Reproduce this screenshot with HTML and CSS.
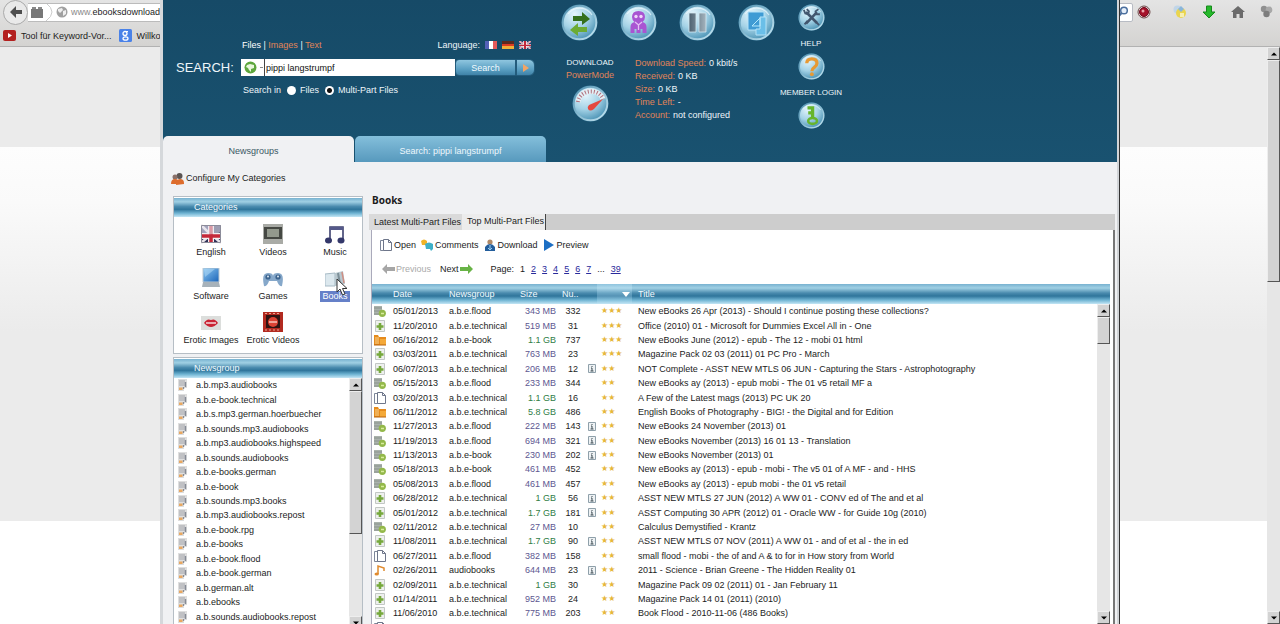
FILE: index.html
```html
<!DOCTYPE html>
<html lang="en">
<head>
<meta charset="utf-8">
<title>Newsgroups - Books</title>
<link rel="stylesheet" href="styles.css">
</head>
<body>
<svg class="sprite" aria-hidden="true">
  <defs>
    <radialGradient id="orb" cx="35%" cy="25%" r="85%"><stop offset="0" stop-color="#e4f5fc"/><stop offset=".5" stop-color="#a4d2e6"/><stop offset="1" stop-color="#3c88ac"/></radialGradient>
    <linearGradient id="rim" x1="0" y1="0" x2="1" y2="1"><stop offset="0" stop-color="#4f8fae"/><stop offset="1" stop-color="#c4e6f3"/></linearGradient>
    <linearGradient id="bars"><stop offset="0" stop-color="#4d6170"/><stop offset="1" stop-color="#a4b4be"/></linearGradient>
    <linearGradient id="screen" x1="0" y1="0" x2="1" y2="1"><stop offset="0" stop-color="#8cc8f2"/><stop offset="1" stop-color="#1b64b8"/></linearGradient>
    <symbol id="disc" viewBox="0 0 37 37"><circle cx="18.500" cy="18.500" r="18" fill="#286a8c"/><circle cx="18.500" cy="18.500" r="16.800" fill="url(#orb)" stroke="url(#rim)" stroke-width="2"/><path d="M7 10C13 2 25 2 31 11" fill="none" stroke="#effaff" stroke-width="1.200" opacity=".7"/></symbol>
    <symbol id="r-server" viewBox="0 0 12 12"><path d="M0 1h8v9H0z" fill="#aab2ac"/><path d="M0 3h8M0 6h8M0 9h7" stroke="#8a928d" stroke-width="1"/><circle cx="8.300" cy="8.300" r="3.600" fill="#93b84a"/><path d="M7 8.500h3" stroke="#d9ec9e" stroke-width="1.500"/></symbol>
    <symbol id="r-plus" viewBox="0 0 12 12"><path d="M1.500.5h9v11h-9z" fill="#eef0ee" stroke="#c2c7c4"/><path d="M6 3v7M2.500 6.500h7" stroke="#76a83c" stroke-width="2.600"/></symbol>
    <symbol id="r-folder" viewBox="0 0 12 12"><path d="M0 1h4l1 2h7v8H0z" fill="#e58a1c"/><path d="M2 3v7M4 3v7" stroke="#fbd491"/><path d="M6 5h6v6H6z" fill="#f4a938"/><path d="M0 11h12" stroke="#b8620c"/></symbol>
    <symbol id="r-pages" viewBox="0 0 12 12"><path d="M.5 1.500h5v10h-5z" fill="#fff" stroke="#7d8699"/><path d="M3.500.5h5l3 3v8h-8z" fill="#fff" stroke="#6e768a"/><path d="M8.500.5v3h3" fill="none" stroke="#6e768a"/></symbol>
    <symbol id="r-music" viewBox="0 0 12 12"><path d="M4 10V2l6 2v3" fill="none" stroke="#e08a2e" stroke-width="1.500"/><ellipse cx="2.700" cy="10" rx="2.200" ry="1.600" fill="#e08a2e"/></symbol>
    <symbol id="r-info" viewBox="0 0 8 9"><path d="M.5.5h7v8h-7z" fill="#eef2f4" stroke="#8fa0aa"/><path d="M4 2v1M3 4h1v3M2.500 7h3" stroke="#3f4c55" fill="none"/></symbol>
    <symbol id="n-group" viewBox="0 0 12 12"><path d="M1 0h9v9H7v3H1z" fill="#dedede"/><path d="M2 2h6M2 4h7M2 6h6" stroke="#a2a4aa"/><path d="M8.500 3v5M6.500 8v2" stroke="#868c96" stroke-width="1.400"/><path d="M2 8.500h3.500V11H2z" fill="#e9a860"/></symbol>
    <symbol id="union" viewBox="0 0 20 20"><path d="M0 0h20v20H0z" fill="#2b3a6b"/><path d="M0 0l20 20M20 0L0 20" stroke="#fff" stroke-width="3.500"/><path d="M0 0l20 20M20 0L0 20" stroke="#c5283a" stroke-width="1.200"/><path d="M10 0v20M0 11h20" stroke="#fff" stroke-width="6"/><path d="M10 0v20M0 11h20" stroke="#c5283a" stroke-width="3.500"/></symbol>
    <symbol id="up" viewBox="0 0 12 12"><path d="M3 7.500l3-3 3 3z" fill="#000"/></symbol>
    <symbol id="down" viewBox="0 0 12 12"><path d="M3 4.500l3 3 3-3z" fill="#000"/></symbol>
  </defs>
</svg>

<div class="browser">
  <header class="chrome">
    <div class="nav">
      <button class="back" aria-label="Back"><svg viewBox="0 0 14 14"><path d="M1 7l6-6v4h6v4H7v4z" fill="#4e4e4e"/></svg></button>
      <div class="address">
        <svg class="i12" viewBox="0 0 12 12"><path d="M0 3h12v9H0z" fill="#777"/><path d="M1 1h4v2H1zM7 1h4v2H7z" fill="#888"/></svg>
        <svg class="chevron" viewBox="0 0 8 18"><path d="M0 0q12 9 0 18" fill="none" stroke="#ccc"/></svg>
        <svg class="i12" viewBox="0 0 12 12"><circle cx="6" cy="6" r="5.500" fill="#a0a0a0"/><path d="M2 3l4-1 1 2-3 3-2-2zM7 5l3-1v4l-3 2z" fill="#eee"/></svg>
        <span class="url"><span class="dim">www.</span>ebooksdownloader.com</span>
      </div>
      <div class="websearch"><svg class="i12" viewBox="0 0 12 12"><circle cx="7" cy="4.500" r="3.300" fill="#e6effa" stroke="#4b6f9e" stroke-width="1.500"/><path d="M4.500 7L1 11" stroke="#4b6f9e" stroke-width="2"/></svg></div>
      <div class="addons">
        <svg viewBox="0 0 14 14"><circle cx="7" cy="7" r="6" fill="#eee" stroke="#6f4848"/><circle cx="7" cy="7" r="4.500" fill="#a5122a" stroke="#6e0a1b"/><circle cx="6" cy="6" r="1.500" fill="#e9a5ac"/></svg>
        <svg viewBox="0 0 14 14"><circle cx="4.500" cy="4.500" r="4" fill="#c0d5e8"/><circle cx="8" cy="8" r="5" fill="#ead54f"/><path d="M5 4l3-3 3 3-3 3z" fill="#8ab6da"/><path d="M7 8h4v4H7z" fill="#f7efb0"/></svg>
        <svg viewBox="0 0 14 14"><path d="M4.500 1h5v6H13l-6 6-6-6h3.500z" fill="#26b92b" stroke="#178a1c"/></svg>
        <svg viewBox="0 0 14 14"><path d="M7 1l7 6h-2v6H8.500V9h-3v4H2V7H0z" fill="#6b6b6b"/></svg>
        <svg viewBox="0 0 14 14"><circle cx="4" cy="4" r="3.200" fill="#8f8f8f"/><circle cx="9" cy="5" r="3.400" fill="#a8a8a8"/><circle cx="6.500" cy="9" r="3.200" fill="#7d7d7d"/></svg>
      </div>
    </div>
    <div class="bookmarks">
      <a href="#"><svg class="i13" viewBox="0 0 13 13"><rect y="1" width="13" height="11" rx="2" fill="#b3201f"/><path d="M5 4l4 2.500L5 9z" fill="#fff"/></svg>Tool für Keyword-Vor...</a>
      <a href="#"><svg class="i13" viewBox="0 0 13 13"><rect width="13" height="13" rx="1.500" fill="#4a82e8"/><circle cx="6" cy="4.500" r="2" fill="none" stroke="#fff" stroke-width="1.300"/><ellipse cx="6.500" cy="9.500" rx="2.500" ry="1.700" fill="none" stroke="#fff" stroke-width="1.300"/><path d="M7 2.500h2" stroke="#fff"/></svg>Willkommen</a>
    </div>
  </header>
  <div class="viewport">
    <div class="backdrop"></div>
    <div class="scroll" role="scrollbar" aria-label="Page" aria-controls="app" aria-valuenow="0"><button aria-label="Up"><svg><use href="#up"/></svg></button><div class="thumb thumb-page"></div><button class="end" aria-label="Down"><svg><use href="#down"/></svg></button></div>
  </div>
</div>

<div class="app" id="app">
  <header class="top">
    <div class="panels">
      <form class="finder">
        <div class="kinds"><span><a href="#" class="on">Files</a> | <a href="#">Images</a> | <a href="#">Text</a></span>
          <span class="langs">Language:
            <svg viewBox="0 0 12 8"><path d="M0 0h4v8H0z" fill="#5361b8"/><path d="M4 0h4v8H4z" fill="#fff"/><path d="M8 0h4v8H8z" fill="#e55a5a"/></svg>
            <svg viewBox="0 0 12 8"><path d="M0 0h12v3H0z" fill="#5b2a20"/><path d="M0 3h12v3H0z" fill="#dc3d22"/><path d="M0 5h12v3H0z" fill="#f0b03a"/></svg>
            <svg viewBox="0 0 20 20" preserveAspectRatio="none"><use href="#union"/></svg>
          </span></div>
        <label class="caption" for="q">SEARCH:</label>
        <div class="field">
          <span class="engine"><svg class="i13" viewBox="0 0 13 13"><circle cx="6.500" cy="6.500" r="6" fill="#5da63c"/><path d="M3 4l3-1 4 1v3L7 8v3L5 9 4 7 2 6z" fill="#e8f6dc"/></svg><i></i></span>
          <input id="q" type="text" value="pippi langstrumpf">
          <button type="button" class="go">Search</button>
          <button type="button" class="more" aria-label="More"><svg viewBox="0 0 6 8"><path d="M0 0l6 4-6 4z" fill="#f2a565"/></svg></button>
        </div>
        <div class="scope">Search in <label><input type="radio" name="s">Files</label><label><input type="radio" name="s" checked>Multi-Part Files</label></div>
      </form>
      <section class="status">
        <div class="orbs">
          <button aria-label="Transfer"><svg viewBox="0 0 37 37"><use href="#disc"/><path d="M12 12h9V8l8 7-8 6v-4h-9z" fill="#35701c"/><path d="M26 23h-9v-4l-8 7 8 6v-4h9z" fill="#6cab34"/></svg></button>
          <button aria-label="Anonymous"><svg viewBox="0 0 37 37"><use href="#disc"/><path d="M12 13q0-6 6.500-6t6.500 6q0 3-2.500 5 4 1 4 5v6h-4v-4h-2v4h-4v-4h-2v4h-4v-6q0-4 4-5-2.500-2-2.500-5z" fill="#a955d2"/><circle cx="16" cy="12.500" r="1.700" fill="#f1d6fb"/><circle cx="21" cy="12.500" r="1.700" fill="#f1d6fb"/><path d="M15 18l3.500 3 3.500-3M18.500 21v5" stroke="#e6bdf5" fill="none" stroke-width="1.300"/></svg></button>
          <button aria-label="Pause"><svg viewBox="0 0 37 37"><use href="#disc"/><path d="M10 9h7v19h-7zM20 9h7v19h-7z" fill="url(#bars)" stroke="#d3e7f0" stroke-width=".8"/></svg></button>
          <button aria-label="Copy"><svg viewBox="0 0 37 37"><use href="#disc"/><path d="M10 8h16v18H10z" fill="#3f9bd4" stroke="#b5e2f7"/><path d="M22 13h6v18H18v-6h4z" fill="#6bbfe8" stroke="#b5e2f7"/><path d="M14 22l8-8v8z" fill="none" stroke="#b5e8fc"/></svg></button>
        </div>
        <div class="meters">
          <div class="power"><span class="caps">DOWNLOAD</span><a href="#">PowerMode</a>
            <svg viewBox="0 0 37 37"><use href="#disc"/><path d="M6 17C8 4 27 3 31 14" fill="none" stroke="#e3eff5" stroke-width="5"/><path d="M6 17C8 4 27 3 31 14" fill="none" stroke="#b0707c" stroke-width="4" stroke-dasharray="1 2"/><path d="M17 20l14-6-9 10q-4 3-6 0-1-2 1-4z" fill="#e4483f"/></svg></div>
          <dl><div><dt>Download Speed:</dt><dd>0 kbit/s</dd></div><div><dt>Received:</dt><dd>0 KB</dd></div><div><dt>Size:</dt><dd>0 KB</dd></div><div><dt>Time Left:</dt><dd>-</dd></div><div><dt>Account:</dt><dd>not configured</dd></div></dl>
        </div>
      </section>
      <nav class="helpers">
        <button aria-label="Settings"><svg viewBox="0 0 37 37"><use href="#disc"/><path d="M11 11l15 15M26 11L11 27" stroke="#42566e" stroke-width="3.500"/><path d="M8 8l2 5 4 1 1-4-3-3M28 7l-4 3 1 4 5 0M9 28l4-5M24 24l5 5" stroke="#42566e" stroke-width="2.500" fill="none"/></svg></button>
        <span class="caps">HELP</span>
        <button aria-label="Help"><svg viewBox="0 0 37 37"><use href="#disc"/><path d="M12 14q0-6 7-6 7 0 7 6 0 3-4 6-3 2-3 5" fill="none" stroke="#e79a34" stroke-width="4.500"/><circle cx="19" cy="29" r="2.600" fill="#e79a34"/></svg></button>
        <span class="caps">MEMBER LOGIN</span>
        <button aria-label="Member login"><svg viewBox="0 0 37 37"><use href="#disc"/><path d="M13 8h7v14M14 15h6" fill="none" stroke="#67b52c" stroke-width="4.500"/><ellipse cx="20" cy="26" rx="6" ry="4" fill="none" stroke="#67b52c" stroke-width="3.500"/></svg></button>
      </nav>
    </div>
    <nav class="tabs"><a href="#" class="active">Newsgroups</a><a href="#">Search: pippi langstrumpf</a></nav>
  </header>

  <main class="work">
    <aside class="side">
      <a href="#" class="configure"><svg class="i13" viewBox="0 0 13 13"><circle cx="8.500" cy="4" r="3" fill="#5a5452"/><circle cx="4" cy="5" r="2.500" fill="#8a716a"/><path d="M5 13q0-6 4-6t4 4v1zM0 12q0-5 4-5t4 4v1z" fill="#dd6c2c"/></svg>Configure My Categories</a>
      <section class="box">
        <h2>Categories</h2>
        <div class="cats">
          <button><svg viewBox="0 0 20 20"><path d="M0 1h20v18H0z" fill="#2f3158"/><path d="M0 1h8v9H0z" fill="#3a3f74"/><path d="M0 1l9 9M20 19l-8-7M0 19l7-6" stroke="#e9e4ea" stroke-width="2.500"/><path d="M10 1v18M0 12h20" stroke="#f4f0f2" stroke-width="6"/><path d="M10 1v18M0 12h20" stroke="#c5283a" stroke-width="3.500"/><path d="M0 1h20v7Q12 12 0 9z" fill="#e8e6ee" opacity=".6"/><path d="M.5 1.500h19v17H.5z" fill="none" stroke="#8c8c9a"/></svg><span>English</span></button>
          <button><svg viewBox="0 0 20 20"><path d="M0 0h20v20H0z" fill="#a9aba6"/><path d="M1 3h18v12H1z" fill="#454843"/><path d="M4 5h12v8H4z" fill="#93998d"/></svg><span>Videos</span></button>
          <button><svg viewBox="0 0 20 20"><path d="M5 16V3h13v13" fill="none" stroke="#3c406e" stroke-width="1.600"/><path d="M5 3h13v3H5z" fill="#55598a"/><ellipse cx="3.500" cy="16.500" rx="3.500" ry="3" fill="#34386a"/><ellipse cx="16" cy="16.500" rx="3.500" ry="3" fill="#34386a"/></svg><span>Music</span></button>
          <button><svg viewBox="0 0 20 20"><path d="M2 0h16v14H2z" fill="url(#screen)" stroke="#bcc9d3"/><path d="M2 14h16l1 5H1z" fill="#a7b2ba"/><path d="M3 1h11L4 9z" fill="#b8def8" opacity=".5"/></svg><span>Software</span></button>
          <button><svg viewBox="0 0 20 20"><path d="M1 18Q-2 5 5 5q5 0 5 3 0-3 5-3 7 0 4 13-3 1-5-5H6q-2 6-5 5z" fill="#86a8ca"/><circle cx="5" cy="9" r="2.600" fill="#3d648e"/><circle cx="15" cy="9" r="2.600" fill="#3d648e"/><circle cx="15" cy="8.500" r="1" fill="#dfeaf5"/><circle cx="5" cy="8.500" r="1" fill="#dfeaf5"/></svg><span>Games</span></button>
          <button class="selected"><svg viewBox="0 0 20 20"><path d="M0 6l10-1v13H0z" fill="#dce8ee" stroke="#a7bac5"/><path d="M10 5l8-2 2 13-10 2z" fill="#b9c8cf"/><path d="M13 5l2 11" stroke="#7c8f98" stroke-width="2"/><path d="M17 4l2 11" stroke="#cf8f84" stroke-width="1.500"/></svg><span>Books</span><svg class="cursor" viewBox="0 0 12 18"><path d="M1 1v13l3-3 2.500 6 2.500-1-2.500-5.500H11z" fill="#fff" stroke="#333"/></svg></button>
          <button><svg viewBox="0 0 20 20"><path d="M0 4h20v14H0z" fill="#dcdedc"/><path d="M3 11q3-5 7-3 4-2 7 3-7 8-14 0z" fill="#c92334"/><path d="M5 11h10" stroke="#f4d8da" stroke-width="1.500"/></svg><span>Erotic Images</span></button>
          <button><svg viewBox="0 0 20 20"><path d="M0 0h20v20H0z" fill="#b22a20"/><path d="M3 3h14v13H3z" fill="#301412"/><circle cx="10" cy="10" r="5" fill="#dc4334"/><path d="M6 10h8" stroke="#f7c4b8" stroke-width="1.500"/><path d="M2 1.500h16M2 18h16" stroke="#efa390" stroke-dasharray="2 2"/></svg><span>Erotic Videos</span></button>
        </div>
      </section>
      <section class="box groups">
        <h2>Newsgroup</h2>
        <div class="listwrap">
          <ul>
            <li><svg><use href="#n-group"/></svg>a.b.mp3.audiobooks</li>
            <li><svg><use href="#n-group"/></svg>a.b.e-book.technical</li>
            <li><svg><use href="#n-group"/></svg>a.b.s.mp3.german.hoerbuecher</li>
            <li><svg><use href="#n-group"/></svg>a.b.sounds.mp3.audiobooks</li>
            <li><svg><use href="#n-group"/></svg>a.b.mp3.audiobooks.highspeed</li>
            <li><svg><use href="#n-group"/></svg>a.b.sounds.audiobooks</li>
            <li><svg><use href="#n-group"/></svg>a.b.e-books.german</li>
            <li><svg><use href="#n-group"/></svg>a.b.e-book</li>
            <li><svg><use href="#n-group"/></svg>a.b.sounds.mp3.books</li>
            <li><svg><use href="#n-group"/></svg>a.b.mp3.audiobooks.repost</li>
            <li><svg><use href="#n-group"/></svg>a.b.e-book.rpg</li>
            <li><svg><use href="#n-group"/></svg>a.b.e-books</li>
            <li><svg><use href="#n-group"/></svg>a.b.e-book.flood</li>
            <li><svg><use href="#n-group"/></svg>a.b.e-book.german</li>
            <li><svg><use href="#n-group"/></svg>a.b.german.alt</li>
            <li><svg><use href="#n-group"/></svg>a.b.ebooks</li>
            <li><svg><use href="#n-group"/></svg>a.b.sounds.audiobooks.repost</li>
          </ul>
          <div class="scroll low" role="scrollbar" aria-label="Newsgroups" aria-controls="app" aria-valuenow="0"><button aria-label="Up"><svg><use href="#up"/></svg></button><div class="thumb thumb-list"></div><button class="end" aria-label="Down"><svg><use href="#down"/></svg></button></div>
        </div>
      </section>
    </aside>

    <section class="content">
      <h1>Books</h1>
      <nav class="subtabs"><a href="#">Latest Multi-Part Files</a><a href="#" class="active">Top Multi-Part Files</a></nav>
      <div class="sheet">
        <div class="tools">
          <button><svg><use href="#r-pages"/></svg>Open</button>
          <button><svg viewBox="0 0 12 12"><path d="M0 2q3-3 6 0v4H1z" fill="#f0b428"/><path d="M4 5q4-3 8 0v5l-2 2-1-2H5z" fill="#3fb0c8"/></svg>Comments</button>
          <button><svg viewBox="0 0 12 12"><circle cx="6" cy="3" r="2.600" fill="#b08a68"/><path d="M1 12V8q2-3 5-3t5 3v4z" fill="#245e9c"/><path d="M6 6v5M4 9l2 2 2-2" stroke="#9cd0f2" fill="none"/></svg>Download</button>
          <button><svg viewBox="0 0 12 12"><path d="M1 0l10 6-10 6z" fill="#1d6fc4"/></svg>Preview</button>
        </div>
        <nav class="pager">
          <button class="prev" disabled><svg viewBox="0 0 13 10"><path d="M0 5l5-5v3h8v4H5v3z" fill="#a6a6a6"/></svg>Previous</button>
          <button class="next">Next<svg viewBox="0 0 13 10"><path d="M13 5L8 0v3H0v4h8v3z" fill="#68b346"/></svg></button>
          <span class="pages">Page: <b>1</b><a href="#">2</a><a href="#">3</a><a href="#">4</a><a href="#">5</a><a href="#">6</a><a href="#">7</a><span>...</span><a href="#">39</a></span>
        </nav>
        <div class="tablewrap">
          <table>
            <colgroup><col class="c-icon"><col class="c-date"><col class="c-group"><col class="c-size"><col class="c-num"><col class="c-info"><col class="c-rate"><col></colgroup>
            <thead><tr><th></th><th>Date</th><th>Newsgroup</th><th>Size</th><th>Nu..</th><th></th><th class="sorted"><svg viewBox="0 0 8 5"><path d="M0 0h8L4 5z" fill="#fff"/></svg></th><th>Title</th></tr></thead>
            <tbody>
<tr><td><svg><use href="#r-server"/></svg></td><td>05/01/2013</td><td>a.b.e.flood</td><td class="mb">343 MB</td><td>332</td><td></td><td>★★★</td><td>New eBooks 26 Apr (2013) - Should I continue posting these collections?</td></tr>
<tr><td><svg><use href="#r-plus"/></svg></td><td>11/20/2010</td><td>a.b.e.technical</td><td class="mb">519 MB</td><td>31</td><td></td><td>★★★</td><td>Office (2010) 01 - Microsoft for Dummies Excel All in - One</td></tr>
<tr><td><svg><use href="#r-folder"/></svg></td><td>06/16/2012</td><td>a.b.e-book</td><td class="gb">1.1 GB</td><td>737</td><td></td><td>★★★</td><td>New eBooks June (2012) - epub - The 12 - mobi 01 html</td></tr>
<tr><td><svg><use href="#r-plus"/></svg></td><td>03/03/2011</td><td>a.b.e.technical</td><td class="mb">763 MB</td><td>23</td><td></td><td>★★★</td><td>Magazine Pack 02 03 (2011) 01 PC Pro - March</td></tr>
<tr><td><svg><use href="#r-plus"/></svg></td><td>06/07/2013</td><td>a.b.e.technical</td><td class="mb">206 MB</td><td>12</td><td><svg><use href="#r-info"/></svg></td><td>★★</td><td>NOT Complete - ASST NEW MTLS 06 JUN - Capturing the Stars - Astrophotography</td></tr>
<tr><td><svg><use href="#r-server"/></svg></td><td>05/15/2013</td><td>a.b.e.flood</td><td class="mb">233 MB</td><td>344</td><td></td><td>★★</td><td>New eBooks ay (2013) - epub mobi - The 01 v5 retail MF a</td></tr>
<tr><td><svg><use href="#r-pages"/></svg></td><td>03/20/2013</td><td>a.b.e.technical</td><td class="gb">1.1 GB</td><td>16</td><td></td><td>★★</td><td>A Few of the Latest mags (2013) PC UK 20</td></tr>
<tr><td><svg><use href="#r-folder"/></svg></td><td>06/11/2012</td><td>a.b.e.technical</td><td class="gb">5.8 GB</td><td>486</td><td></td><td>★★</td><td>English Books of Photography - BIG! - the Digital and for Edition</td></tr>
<tr><td><svg><use href="#r-server"/></svg></td><td>11/27/2013</td><td>a.b.e.flood</td><td class="mb">222 MB</td><td>143</td><td><svg><use href="#r-info"/></svg></td><td>★★</td><td>New eBooks 24 November (2013) 01</td></tr>
<tr><td><svg><use href="#r-server"/></svg></td><td>11/19/2013</td><td>a.b.e.flood</td><td class="mb">694 MB</td><td>321</td><td><svg><use href="#r-info"/></svg></td><td>★★</td><td>New eBooks November (2013) 16 01 13 - Translation</td></tr>
<tr><td><svg><use href="#r-server"/></svg></td><td>11/13/2013</td><td>a.b.e-book</td><td class="mb">230 MB</td><td>202</td><td><svg><use href="#r-info"/></svg></td><td>★★</td><td>New eBooks November (2013) 01</td></tr>
<tr><td><svg><use href="#r-server"/></svg></td><td>05/18/2013</td><td>a.b.e-book</td><td class="mb">461 MB</td><td>452</td><td></td><td>★★</td><td>New eBooks ay (2013) - epub - mobi - The v5 01 of A MF - and - HHS</td></tr>
<tr><td><svg><use href="#r-server"/></svg></td><td>05/08/2013</td><td>a.b.e.flood</td><td class="mb">461 MB</td><td>457</td><td></td><td>★★</td><td>New eBooks ay (2013) - epub mobi - the 01 v5 retail</td></tr>
<tr><td><svg><use href="#r-plus"/></svg></td><td>06/28/2012</td><td>a.b.e.technical</td><td class="gb">1 GB</td><td>56</td><td><svg><use href="#r-info"/></svg></td><td>★★</td><td>ASST NEW MTLS 27 JUN (2012) A WW 01 - CONV ed of The and et al</td></tr>
<tr><td><svg><use href="#r-plus"/></svg></td><td>05/01/2012</td><td>a.b.e.technical</td><td class="gb">1.7 GB</td><td>181</td><td><svg><use href="#r-info"/></svg></td><td>★★</td><td>ASST Computing 30 APR (2012) 01 - Oracle WW - for Guide 10g (2010)</td></tr>
<tr><td><svg><use href="#r-server"/></svg></td><td>02/11/2012</td><td>a.b.e.technical</td><td class="mb">27 MB</td><td>10</td><td></td><td>★★</td><td>Calculus Demystified - Krantz</td></tr>
<tr><td><svg><use href="#r-plus"/></svg></td><td>11/08/2011</td><td>a.b.e.technical</td><td class="gb">1.7 GB</td><td>90</td><td><svg><use href="#r-info"/></svg></td><td>★★</td><td>ASST NEW MTLS 07 NOV (2011) A WW 01 - and of et al - the in ed</td></tr>
<tr><td><svg><use href="#r-pages"/></svg></td><td>06/27/2011</td><td>a.b.e.flood</td><td class="mb">382 MB</td><td>158</td><td></td><td>★★</td><td>small flood - mobi - the of and A &amp; to for in How story from World</td></tr>
<tr><td><svg><use href="#r-music"/></svg></td><td>02/26/2011</td><td>audiobooks</td><td class="mb">644 MB</td><td>23</td><td><svg><use href="#r-info"/></svg></td><td>★★</td><td>2011 - Science - Brian Greene - The Hidden Reality 01</td></tr>
<tr><td><svg><use href="#r-plus"/></svg></td><td>02/09/2011</td><td>a.b.e.technical</td><td class="gb">1 GB</td><td>30</td><td></td><td>★★</td><td>Magazine Pack 09 02 (2011) 01 - Jan February 11</td></tr>
<tr><td><svg><use href="#r-plus"/></svg></td><td>01/14/2011</td><td>a.b.e.technical</td><td class="mb">952 MB</td><td>24</td><td></td><td>★★</td><td>Magazine Pack 14 01 (2011) (2010)</td></tr>
<tr><td><svg><use href="#r-plus"/></svg></td><td>11/06/2010</td><td>a.b.e.technical</td><td class="mb">775 MB</td><td>203</td><td></td><td>★★</td><td>Book Flood - 2010-11-06 (486 Books)</td></tr>
<tr><td><svg><use href="#r-pages"/></svg></td><td></td><td></td><td></td><td></td><td></td><td></td><td></td></tr>
            </tbody>
          </table>
          <div class="scroll" role="scrollbar" aria-label="Results" aria-controls="app" aria-valuenow="0"><button aria-label="Up"><svg><use href="#up"/></svg></button><div class="thumb thumb-table"></div><button class="end" aria-label="Down"><svg><use href="#down"/></svg></button></div>
        </div>
      </div>
    </section>
  </main>
</div>
</body>
</html>
```
FILE: styles.css
```css
* { box-sizing: border-box; }
body { margin: 0; height: 100vh; overflow: hidden; font: 9px/12px "Liberation Sans", Arial, sans-serif; color: #1c1c1c; position: relative; }
button, input { font: inherit; color: inherit; }
button { border: 0; padding: 0; background: none; display: block; }
a { color: inherit; text-decoration: none; }
svg { display: block; flex: none; }
h1, h2, ul, dl, dd { margin: 0; padding: 0; }
.sprite { position: absolute; width: 0; height: 0; }
.i12 { width: 12px; height: 12px; }
.i13 { width: 13px; height: 13px; }

/* browser behind the application window */
.browser { height: 100%; display: flex; flex-direction: column; }
.chrome { height: 47px; flex: none; background: linear-gradient(#e4e4e4, #d4d3d1); border-bottom: 1px solid #b2b2b2; }
.nav { display: flex; align-items: center; height: 24px; }
.back { width: 25px; height: 25px; margin-left: 3px; border-radius: 50%; background: #e9e9e9; border: 1px solid #aaa; display: grid; place-items: center; flex: none; }
.back svg { width: 14px; height: 14px; }
.address { flex: 1; display: flex; align-items: center; height: 19px; background: #fff; border: 1px solid #bbb; border-left: 0; padding-left: 3px; overflow: hidden; }
.chevron { width: 8px; height: 18px; margin: 0 2px 0 3px; }
.url { margin-left: 3px; }
.dim { color: #8a8a8a; }
.websearch { width: 180px; height: 19px; background: #fff; border: 1px solid #b8bcc4; border-radius: 2px; display: flex; align-items: center; justify-content: flex-end; padding-right: 3px; margin-left: 6px; }
.addons { display: flex; gap: 15px; padding: 0 6px 0 4px; }
.addons svg { width: 14px; height: 14px; }
.addons svg:first-child { margin-right: 7px; }
.bookmarks { display: flex; align-items: center; gap: 7px; height: 23px; padding-left: 3px; }
.bookmarks a { display: flex; align-items: center; gap: 5px; white-space: nowrap; }
.viewport { flex: 1; display: flex; min-height: 0; }
.backdrop { flex: 1; background: linear-gradient(#ebebeb 100px, #fdfdfd 100px, #fafafa 155px, #ebebeb 285px, #ebebeb 474px, #fff 474px); }

/* classic scrollbars */
.scroll { width: 13px; display: flex; flex-direction: column; background: #e6e6e6; overflow: hidden; }
.scroll button, .thumb { background: #d3d3d3; border: 1px solid #eee; border-right-color: #555; border-bottom-color: #555; flex: none; }
.scroll button { height: 13px; display: grid; place-items: center; overflow: hidden; }
.scroll button svg { width: 12px; height: 12px; }
.scroll .end { margin-top: auto; }
.low .end { margin-bottom: -5px; }
.thumb-page { height: 222px; }
.thumb-list { height: 143px; }
.thumb-table { height: 27px; }

/* application window */
.app { position: absolute; top: 0; bottom: 0; left: 160px; right: 160px; display: flex; flex-direction: column; background: #f0f1f3; border-left: 3px solid #d5d8db; border-right: 1px solid #333; overflow: hidden; }
.app::after { content: ""; position: absolute; top: 0; bottom: 0; right: 0; width: 2px; background: #d2d5d8; }
.top { height: 162px; flex: none; display: flex; flex-direction: column; background: linear-gradient(#164a67, #195270); color: #eef6fa; }
.panels { flex: 1; display: flex; min-height: 0; }
.finder { width: 385px; margin-left: 13px; flex: none; display: grid; grid-template-columns: 65px 294px; grid-template-rows: 12px 17px 12px; row-gap: 8px; align-content: start; padding-top: 39px; }
.kinds, .scope { grid-column: 2; display: flex; align-items: center; }
.kinds { justify-content: space-between; padding: 0 4px 0 1px; }
.kinds a, .power a, dt { color: #e08458; }
.kinds .on { color: #fff; }
.langs { display: flex; align-items: center; gap: 5px; }
.langs svg { width: 12px; height: 8px; }
.caption { font-size: 13px; line-height: 17px; }
.field { display: flex; color: #111; }
.engine { width: 23px; background: #fff; display: flex; align-items: center; gap: 3px; padding-left: 3px; }
.engine i { width: 3px; height: 1px; background: #888; }
.field input { width: 191px; min-width: 0; border: 0; border-left: 1px solid #444; background: #fff; padding: 0 1px; }
.go, .more { background: linear-gradient(#8fc6df, #5ba0c3 60%, #3f82a7); color: #f3fbff; border: 1px solid #235c7c; }
.go { width: 61px; border-radius: 4px 0 0 4px; }
.more { width: 19px; border-radius: 0 6px 6px 0; display: grid; place-items: center; }
.more svg { width: 6px; height: 8px; }
.scope { padding-left: 2px; }
.scope label { display: flex; align-items: center; gap: 4px; margin-left: 6px; }
.scope input { appearance: none; width: 9px; height: 9px; margin: 0; border-radius: 50%; background: #fff; }
.scope input:checked { background: radial-gradient(#111 2px, #fff 3px); }
.status { width: 216px; flex: none; padding-top: 4px; }
.orbs { display: flex; gap: 22px; }
.orbs svg, .power svg { width: 37px; height: 37px; }
.meters { display: flex; gap: 16px; margin-top: 16px; }
.power { width: 58px; display: flex; flex-direction: column; align-items: center; }
.power svg { margin-top: 4px; }
.caps { font-size: 8px; white-space: nowrap; }
dl div { display: flex; gap: 3px; line-height: 13px; white-space: nowrap; }
.helpers { width: 68px; display: flex; flex-direction: column; align-items: center; padding-top: 4px; }
.helpers svg { width: 27px; height: 27px; }
.helpers .caps { line-height: 10px; margin: 8px 0 4px; }
.tabs { display: flex; gap: 1px; height: 26px; }
.tabs a { width: 191px; display: grid; place-items: center; padding-top: 4px; border-radius: 5px 5px 0 0; background: linear-gradient(#84bfdb, #5799bd); color: #eef8fd; }
.tabs .active { background: #f0f1f3; color: #3a5763; padding-right: 10px; }

.work { flex: 1; min-height: 0; display: flex; gap: 6px; padding: 0 4px 0 10px; }
.side { width: 190px; flex: none; display: flex; flex-direction: column; }
.configure { display: flex; align-items: center; height: 32px; margin-left: -2px; gap: 2px; }
.box { background: #fff; border: 1px solid #b6bec5; margin-top: 2px; }
.box h2, th { background: linear-gradient(#78b2d0, #a0d0e4 20%, #4a8bae 45%, #2f759b 60%, #6eb3d2 80%, #c4e6f5); color: #f2fafe; font-weight: normal; }
.box h2 { font-size: 9px; line-height: 19px; height: 19px; padding-left: 20px; margin-top: 1px; }
.cats { display: grid; grid-template-columns: repeat(3, 62px); grid-auto-rows: 44px; padding: 7px 0 0 6px; justify-items: center; height: 136px; }
.cats button { display: flex; flex-direction: column; align-items: center; align-self: start; position: relative; white-space: nowrap; }
.cats button > svg:first-child { width: 20px; height: 20px; margin-bottom: 3px; }
.cats span { line-height: 11px; padding: 0 2px; }
.selected span { background: #6580c8; color: #fff; }
.cats .cursor { position: absolute; width: 12px; height: 18px; left: 16px; top: 10px; }
.groups { flex: 1; min-height: 0; border-bottom: 0; margin-top: 3px; display: flex; flex-direction: column; }
.groups h2 { flex: none; }
.listwrap { flex: 1; min-height: 0; display: flex; }
ul { flex: 1; list-style: none; display: flex; flex-direction: column; padding-left: 3px; }
li { flex: 1; display: flex; align-items: center; gap: 7px; white-space: nowrap; }
li svg { width: 12px; height: 12px; }

.content { flex: 1; min-width: 0; display: flex; flex-direction: column; }
h1 { font: bold 10px/12px "Noto Sans", sans-serif; padding: 32px 0 8px 3px; }
.subtabs { display: flex; height: 16px; background: #cdcdcd; flex: none; line-height: 16px; }
.subtabs a { padding: 0 1px 0 5px; background: #dadada; }
.subtabs .active { background: #ececec; border-right: 1px solid #444; line-height: 14px; }
.sheet { flex: 1; min-height: 0; background: #fff; margin-left: 2px; border-left: 1px solid #aab; border-right: 2px solid #777; display: flex; flex-direction: column; }
.tools, .pager { display: flex; align-items: center; padding-left: 8px; flex: none; }
.tools { height: 30px; gap: 5px; }
.tools button { display: flex; align-items: center; gap: 2px; }
.tools svg { width: 12px; height: 12px; }
.pager { height: 18px; padding-left: 10px; gap: 9px; }
.pager button { display: flex; align-items: center; gap: 1px; }
.pager svg { width: 13px; height: 10px; }
.prev { color: #aaa; }
.pages { display: flex; gap: 6px; margin-left: 9px; }
.pages b { font-weight: normal; }
.pages a { color: #2a2a9c; text-decoration: underline; }
.tablewrap { flex: 1; min-height: 0; margin: 6px 3px 0 0; display: grid; grid-template-columns: 1fr 13px; grid-template-rows: 20px minmax(0, 1fr); }
table { grid-area: 1 / 1 / 3 / 3; border-collapse: collapse; table-layout: fixed; width: 100%; height: calc(100% + 11px); }
.tablewrap .scroll { grid-area: 2 / 2; z-index: 1; }
.c-icon { width: 19px; }
.c-date { width: 56px; }
.c-group { width: 71px; }
.c-size { width: 42px; }
.c-num { width: 26px; }
.c-info { width: 11px; }
.c-rate { width: 35px; }
th { height: 20px; padding: 0 2px; text-align: left; }
th:last-child, td:last-child { padding-left: 6px; }
th.sorted { background: linear-gradient(#8fc4de, #b0daec 20%, #6ba6c5 45%, #5593b5 60%, #84c1dc 80%, #c4e6f5); color: #fff; }
th svg { width: 8px; height: 5px; margin-left: auto; }
td { padding: 0 2px; line-height: 12px; white-space: nowrap; vertical-align: middle; }
td svg { width: 12px; height: 12px; }
td:nth-child(4) { text-align: right; padding-right: 4px; }
td:nth-child(5) { text-align: center; }
td:nth-child(6) svg { width: 8px; height: 9px; }
td:nth-child(7) { color: #e6b73c; font: 8px/10px "DejaVu Sans", sans-serif; padding-left: 4px; }
.mb { color: #5d5791; }
.gb { color: #2f7d46; }
```
